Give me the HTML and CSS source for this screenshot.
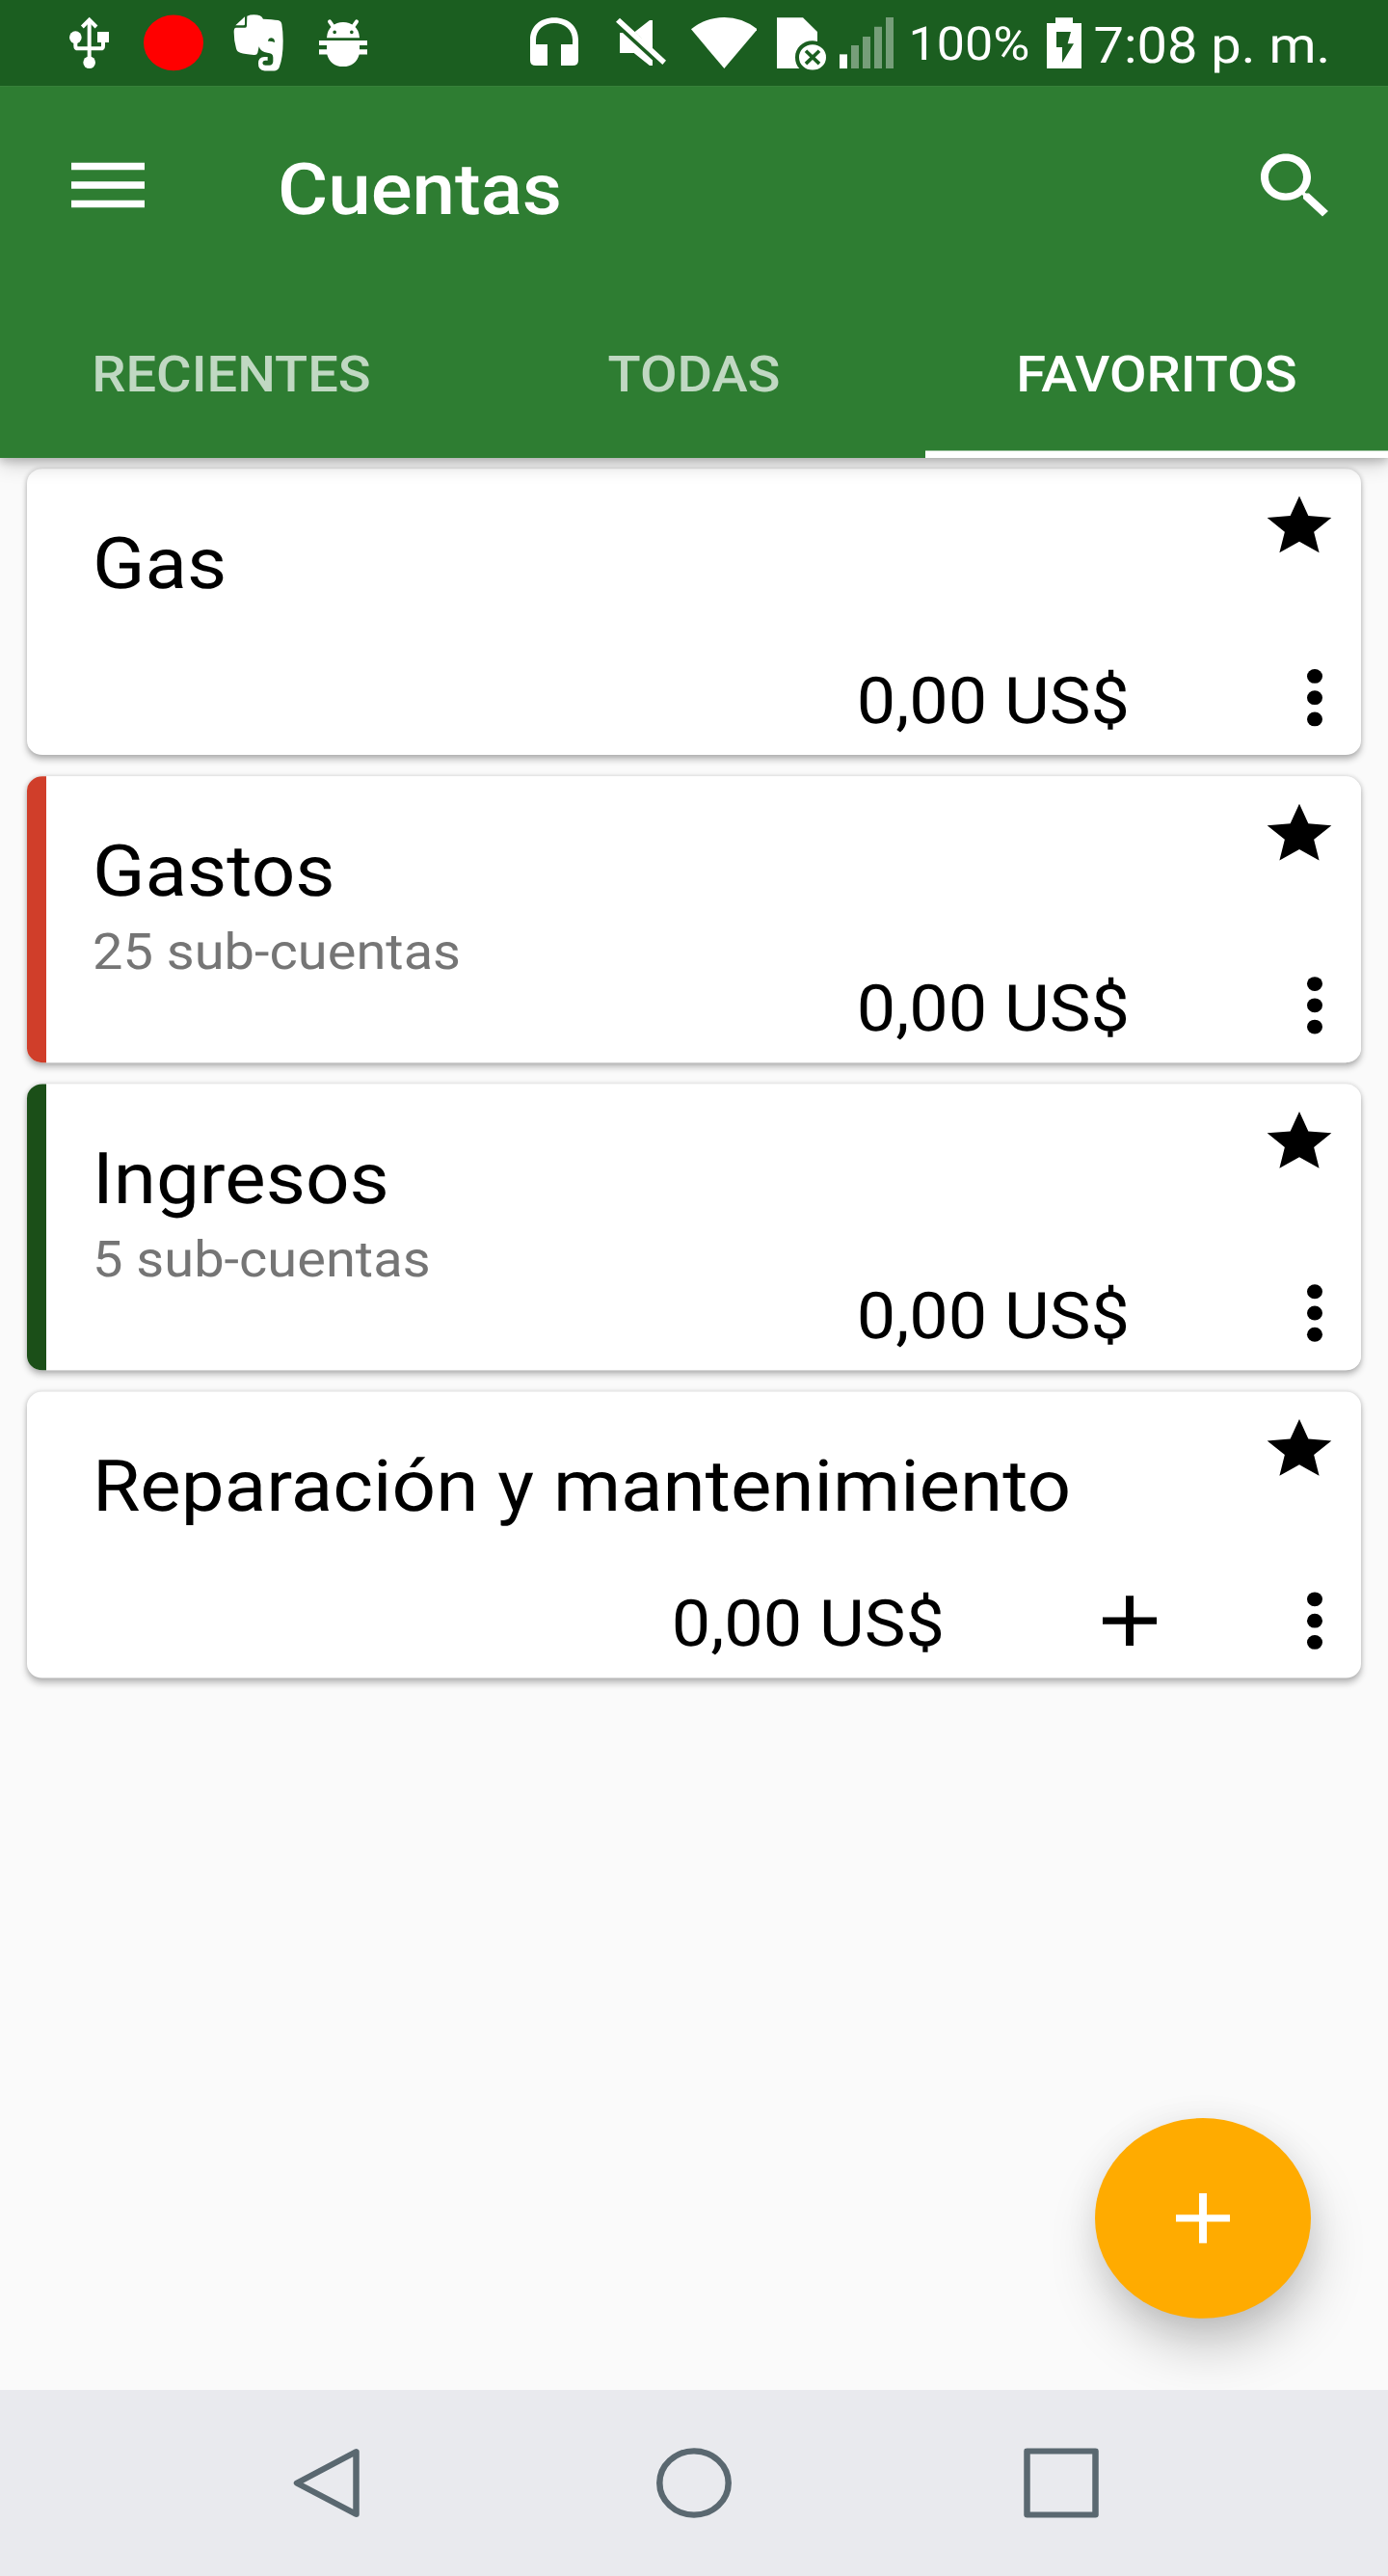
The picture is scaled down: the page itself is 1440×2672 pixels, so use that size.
FILE: index.html
```html
<!DOCTYPE html>
<html lang="es">
<head>
<meta charset="utf-8">
<title>Cuentas</title>
<link rel="stylesheet" href="styles.css">
</head>
<body>
<svg class="defs" width="0" height="0" aria-hidden="true">
  <symbol id="star" viewBox="0 0 24 24"><path d="M12 17.27L18.18 21l-1.64-7.03L22 9.24l-7.19-.61L12 2 9.19 8.63 2 9.24l5.46 4.73L5.82 21z"/></symbol>
  <symbol id="more" viewBox="0 0 24 24"><circle cx="12" cy="6" r="2"/><circle cx="12" cy="12" r="2"/><circle cx="12" cy="18" r="2"/></symbol>
  <symbol id="plus" viewBox="0 0 24 24"><path d="M19 13h-6v6h-2v-6H5v-2h6V5h2v6h6z"/></symbol>
</svg>
<div class="viewport">
<div class="screen">
  <div class="statusbar">
    <svg class="st usb" viewBox="213 0 129 267" preserveAspectRatio="none">
      <g fill="none" stroke="#fff" stroke-width="12"><path d="M278 62V190"/><path d="M235 118V143Q235 151 243 151H313Q321 151 321 143V118"/><path d="M256 84L278 62L300 84"/></g>
      <circle cx="235" cy="116" r="19"/><rect x="303" y="99" width="36" height="33"/><circle cx="278" cy="194" r="19"/>
    </svg>
    <svg class="st rec" viewBox="447 0 186 267" preserveAspectRatio="none"><ellipse cx="540" cy="133" rx="93" ry="86.500" fill="#f00"/></svg>
    <svg class="st ever" viewBox="723 0 162 267" preserveAspectRatio="none">
      <path d="M733 79L762 52V76Q762 79 758 79Z"/>
      <path fill-rule="evenodd" d="M769 50Q778 46 790 46Q814 46 819 59Q848 60 865 63Q875 65 877 75Q881 98 881 127Q881 180 869 210Q864 220 853 220L824 220Q803 218 804 197Q804 177 823 177L833 177V188H825Q817 189 817 196Q818 203 826 203H838Q850 202 850 190V178Q850 165 832 164Q812 163 806 145L802 164Q800 172 790 171Q762 168 748 164Q738 162 735 151Q728 127 728 99Q728 86 735 86H763Q768 86 768 80ZM834 128Q835 118 845 118Q855 119 855 132Q844 127 834 128Z"/>
    </svg>
    <svg class="st droid" viewBox="990 0 156 267" preserveAspectRatio="none">
      <path d="M1026 67L1037 83M1110 67L1099 83" fill="none" stroke="#fff" stroke-width="12" stroke-linecap="round"/>
      <path fill-rule="evenodd" d="M1017 118Q1018 93 1034 81Q1048 69 1068 69Q1088 69 1102 81Q1118 93 1119 118ZM1036 100a5.500 5.500 0 1 0 11 0a5.500 5.500 0 1 0 -11 0ZM1089 100a5.500 5.500 0 1 0 11 0a5.500 5.500 0 1 0 -11 0Z"/>
      <path d="M993 126H1143V141H1119V154H1143V169H1118C1112 192 1094 207 1068 207C1042 207 1024 192 1018 169H993V154H1017V141H993Z"/>
    </svg>
    <span class="spacer"></span>
    <svg class="st phones" viewBox="150 0 150 267" preserveAspectRatio="none"><path d="M150 124C150 82 182 55 225 55S300 82 300 124V187Q300 204 282 204H246V138H282V124C282 93 257 72 225 72S168 93 168 124V138H204V204H168Q150 204 150 187Z"/></svg>
    <svg class="st mute" viewBox="417 0 156 267" preserveAspectRatio="none"><path d="M429 56L573 188L562 201L417 68ZM531 63V150L476 99L522 63ZM429 102H438L531 187V204H522L473 165H429Z"/></svg>
    <svg class="st wifi" viewBox="650 0 206 267" preserveAspectRatio="none"><path d="M650 91Q696 54 753 54T856 91L753 213Z"/></svg>
    <svg class="st sim" viewBox="918 0 153 267" preserveAspectRatio="none">
      <path d="M918 55H999L1044 99V129Q1036 127 1029 127C998 127 975 150 975 178Q975 199 988 213H918Z"/>
      <ellipse cx="1029" cy="178" rx="42" ry="39.500"/><path d="M1008 158L1050 198M1050 158L1008 198" fill="none" stroke="#1b5e20" stroke-width="11"/>
    </svg>
    <svg class="st signal" viewBox="1113 0 168 267" preserveAspectRatio="none"><rect x="1113" y="169" width="24" height="44"/><path opacity=".4" d="M1149 141h24v72h-24zM1185 114h24v99h-24zM1221 83h24v130h-24zM1257 54h24v159h-24z"/></svg>
    <span class="percent">100%</span>
    <svg class="st battery" viewBox="378 0 108 267" preserveAspectRatio="none"><path fill-rule="evenodd" d="M405 55H459V72H486V213H378V72H405ZM408 99V147H426V195L462 136H443L453 99Z"/></svg>
    <span class="clock">7:08 p. m.</span>
  </div>

  <header class="appbar">
    <div class="toolbar">
      <svg class="menu" viewBox="0 0 76 52"><path d="M0 1h76v8H0zM0 22h76v8H0zM0 43h76v8H0z"/></svg>
      <h1 class="title">Cuentas</h1>
      <svg class="icon" viewBox="0 0 24 24"><path d="M15.500 14h-.79l-.28-.27C15.410 12.590 16 11.110 16 9.500 16 5.910 13.090 3 9.500 3S3 5.910 3 9.500 5.910 16 9.500 16c1.610 0 3.090-.59 4.230-1.570l.27.28v.79l5 4.990L20.490 19l-4.990-5zm-6 0C7.010 14 5 11.990 5 9.500S7.010 5 9.500 5 14 7.010 14 9.500 11.990 14 9.500 14z"/></svg>
    </div>
    <nav class="tabs">
      <span class="tab">RECIENTES</span>
      <span class="tab">TODAS</span>
      <span class="tab active">FAVORITOS</span>
    </nav>
  </header>

  <main class="content">
    <article class="card">
      <div class="info"><div class="name">Gas</div></div>
      <svg class="star"><use href="#star"/></svg>
      <div class="actions"><span class="balance">0,00 US$</span><svg class="icon"><use href="#more"/></svg></div>
    </article>
    <article class="card expense">
      <div class="info"><div class="name">Gastos</div><div class="sub">25 sub-cuentas</div></div>
      <svg class="star"><use href="#star"/></svg>
      <div class="actions"><span class="balance">0,00 US$</span><svg class="icon"><use href="#more"/></svg></div>
    </article>
    <article class="card income">
      <div class="info"><div class="name">Ingresos</div><div class="sub">5 sub-cuentas</div></div>
      <svg class="star"><use href="#star"/></svg>
      <div class="actions"><span class="balance">0,00 US$</span><svg class="icon"><use href="#more"/></svg></div>
    </article>
    <article class="card">
      <div class="info"><div class="name">Reparación y mantenimiento</div></div>
      <svg class="star"><use href="#star"/></svg>
      <div class="actions"><span class="balance">0,00 US$</span><svg class="icon add"><use href="#plus"/></svg><svg class="icon"><use href="#more"/></svg></div>
    </article>
    <div class="fab"><svg class="icon"><use href="#plus"/></svg></div>
  </main>

  <footer class="navbar">
    <svg class="nav" viewBox="0 0 80 80"><path d="M70.500 5V75L9 40Z"/></svg>
    <svg class="nav" viewBox="0 0 80 80"><circle cx="40" cy="40" r="35.700"/></svg>
    <svg class="nav" viewBox="0 0 80 80"><rect x="4.500" y="4.500" width="71" height="71"/></svg>
  </footer>
</div>
</div>
</body>
</html>
```
FILE: styles.css
```css
* { box-sizing: border-box; }

body {
  margin: 0;
  background: #fafafa;
  font-family: Roboto, "Liberation Sans", sans-serif;
  text-rendering: geometricPrecision;
}

.defs { display: block; }

.viewport {
  width: 1440px;
  height: 2672px;
  overflow: hidden;
}

/* The phone screen is laid out at 1440x2880 and squeezed to the viewport height. */
.screen {
  display: flex;
  flex-direction: column;
  width: 1440px;
  height: 2880px;
  transform: scaleY(.927778);
  transform-origin: 0 0;
}

svg { display: block; flex: none; }

.icon { width: 96px; height: 96px; }

/* Status bar */
.statusbar {
  position: relative;
  z-index: 2;
  display: flex;
  height: 96px;
  padding: 0 62px 0 71px;
  background: #1b5e20;
  color: #fff;
  fill: #fff;
}
.st { height: 96px; }
.usb { width: 43px; margin-right: 35px; }
.rec { width: 62px; margin-right: 30px; }
.ever { width: 54px; margin-right: 35px; }
.droid { width: 52px; }
.spacer { flex: 1; }
.phones { width: 50px; margin-right: 39px; }
.mute { width: 52px; margin-right: 25.700px; }
.wifi { width: 68.700px; margin-right: 20.600px; }
.sim { width: 51px; margin-right: 14px; }
.signal { width: 56px; }
.percent {
  width: 159px;
  padding-left: 15.500px;
  font-size: 52px;
  line-height: 100px;
  white-space: nowrap;
}
.battery { width: 36px; }
.clock {
  width: 256px;
  padding-left: 12.500px;
  font-size: 56px;
  line-height: 102px;
  white-space: nowrap;
}

/* App bar */
.appbar {
  position: relative;
  z-index: 1;
  height: 416px;
  background: #2e7d32;
  color: #fff;
  fill: #fff;
  box-shadow: 0 4px 8px rgba(0, 0, 0, .16), 0 8px 20px rgba(0, 0, 0, .18);
}
.toolbar {
  display: flex;
  align-items: center;
  height: 224px;
  padding: 0 48px 0 74px;
}
.menu { width: 76px; height: 52px; margin-top: -2px; }
.title {
  flex: 1;
  margin: 0;
  padding: 7px 0 0 138px;
  font-size: 80px;
  font-weight: 500;
  line-height: 94px;
}
.tabs {
  display: grid;
  grid-template-columns: repeat(3, 1fr);
  grid-template-rows: 192px;
  height: 192px;
}
.tab {
  height: 192px;
  padding-top: 6px;
  font-size: 56px;
  font-weight: 500;
  line-height: 186px;
  text-align: center;
  color: rgba(255, 255, 255, .7);
}
.active {
  color: #fff;
  box-shadow: inset 0 -8px #fff;
}

/* Account list */
.content {
  position: relative;
  display: flex;
  flex-direction: column;
  gap: 24px;
  height: 2160px;
  padding: 12px 28px;
  background: #fafafa;
}
.card {
  display: grid;
  grid-template-rows: 208px 96px;
  height: 320px;
  border-radius: 16px;
  background: #fff;
  box-shadow: 0 5px 8px rgba(0, 0, 0, .24), 0 0 5px rgba(0, 0, 0, .14);
}
.expense { background: linear-gradient(90deg, #d03e2a 20px, #fff 20px); }
.income { background: linear-gradient(90deg, #1b4f18 20px, #fff 20px); }
.info {
  grid-area: 1 / 1 / 3 / 2;
  padding: 59px 0 0 68px;
}
.name { font-size: 80px; line-height: 94px; color: #000; }
.sub { margin-top: 10px; font-size: 56px; line-height: 66px; color: #757575; }
.star {
  grid-area: 1 / 1;
  justify-self: end;
  width: 80px;
  height: 80px;
  margin: 24px 24px 0 0;
}
.actions {
  grid-area: 2 / 1;
  display: flex;
  justify-content: flex-end;
}
.balance {
  margin-right: 144px;
  padding-top: 4px;
  font-size: 72px;
  line-height: 96px;
  color: #000;
}
.add { margin-right: 96px; }

.fab {
  position: absolute;
  right: 80px;
  bottom: 80px;
  display: grid;
  place-items: center;
  width: 224px;
  height: 224px;
  border-radius: 50%;
  background: #ffab00;
  fill: #fff;
  box-shadow: 5px 34px 60px -8px rgba(0, 0, 0, .25), 0 2px 36px rgba(0, 0, 0, .07);
}

/* System navigation */
.navbar {
  position: relative;
  display: flex;
  align-items: center;
  justify-content: center;
  gap: 301px;
  height: 208px;
  background: #e9eaee;
}
.nav {
  width: 80px;
  height: 80px;
  fill: none;
  stroke: #5a6870;
  stroke-width: 6.500;
  stroke-linejoin: round;
}
```
